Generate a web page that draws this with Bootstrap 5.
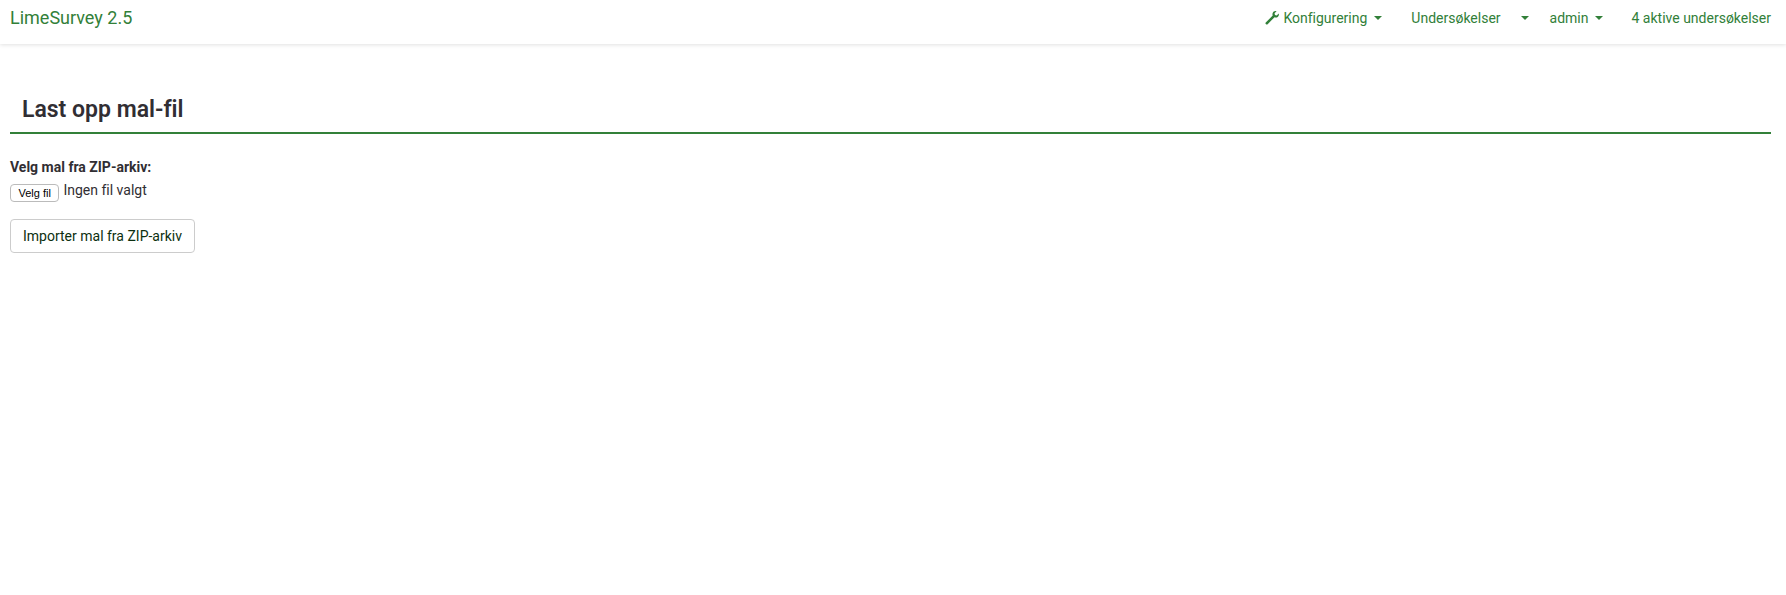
<!DOCTYPE html>
<html lang="no">
<head>
  <meta charset="UTF-8">
  <meta name="viewport" content="width=device-width, initial-scale=1.0">
  <title>LimeSurvey - Last opp mal-fil</title>
  <link href="https://cdn.jsdelivr.net/npm/bootstrap@5.3.0/dist/css/bootstrap.min.css" rel="stylesheet">
  <style>
    body { font-family: Roboto, "Liberation Sans", sans-serif; font-size: 14px; font-variant-ligatures: none; color: #312e33; background: #fff; }
    .top-bar { height: 44px; padding: 0 15px 0 10px; background: #fff; box-shadow: 0 1px 4px rgba(0,0,0,.12); }
    .top-bar a { color: #328039; text-decoration: none; }
    .brand-link { font-size: 18px; line-height: 36px; }
    .top-links { gap: 22px; line-height: 36px; }
    .top-links a { display: flex; align-items: center; }
    .wide-gap { margin-right: 7px; }
    .tight-gap { margin-right: -1px; }
    .menu-caret { display: inline-block; width: 0; height: 0; margin-left: 7px; border-top: 4px solid #328039; border-left: 4px solid transparent; border-right: 4px solid transparent; }
    .caret-far { margin-left: 20px; }
    .caret-near { margin-left: 6px; }
    .wrench-icon { width: 14px; height: 14px; margin-right: 4px; fill: #328039; }
    .page-wrap { padding: 0 15px 0 10px; }
    .page-title { margin: 48px 0 0; padding: 0 12px 5px; font-size: 23px; font-weight: 600; line-height: 35px; color: #312e33; border-bottom: 2px solid #328039; }
    .pick-label { margin: 23px 0 0; font-weight: 700; line-height: 20px; }
    .pick-row { margin-top: 3px; line-height: 20px; gap: 4px; }
    .pick-btn { padding: 0 7.500px; height: 18px; font-family: "Liberation Sans", sans-serif; font-size: 11px; line-height: 16px; color: #000; background: #fff; border: 1px solid #bbb; border-radius: 4px; }
    .import-btn { margin-top: 17px; padding: 0 12px; height: 34px; font-size: 14px; color: #0c2f10; background: #fff; border: 1px solid #ccc; border-radius: 4px; }
  </style>
</head>

<body>
  <nav class="top-bar d-flex justify-content-between align-items-start">
    <a class="brand-link" href="#">LimeSurvey 2.5</a>
    <div class="top-links d-flex">
      <a class="wide-gap" href="#">
        <svg class="wrench-icon" viewBox="0 0 16 16"><path d="M15.700 2.800c.6 2-.4 3.900-2.200 4.500-.9.300-1.800.2-2.600-.1L3 15.100c-.5.500-1.300.5-1.800 0l-.3-.3c-.5-.5-.5-1.300 0-1.800l7.900-7.900c-.3-.8-.4-1.700-.1-2.600C9.300 .7 11.200-.3 13.200.3L10.900 2.600l.5 2 2 .5z"/></svg>
        Konfigurering<span class="menu-caret"></span>
      </a>
      <a class="tight-gap" href="#">Undersøkelser<span class="menu-caret caret-far"></span></a>
      <a class="wide-gap" href="#">admin<span class="menu-caret caret-near"></span></a>
      <a href="#">4 aktive undersøkelser</a>
    </div>
  </nav>

  <div class="page-wrap">
    <h3 class="page-title">Last opp mal-fil</h3>
    <form>
      <p class="pick-label">Velg mal fra ZIP-arkiv:</p>
      <div class="pick-row d-flex align-items-start">
        <button type="button" class="pick-btn mt-1">Velg fil</button>
        <span>Ingen fil valgt</span>
      </div>
      <button type="button" class="import-btn d-block">Importer mal fra ZIP-arkiv</button>
    </form>
  </div>
</body>
</html>
